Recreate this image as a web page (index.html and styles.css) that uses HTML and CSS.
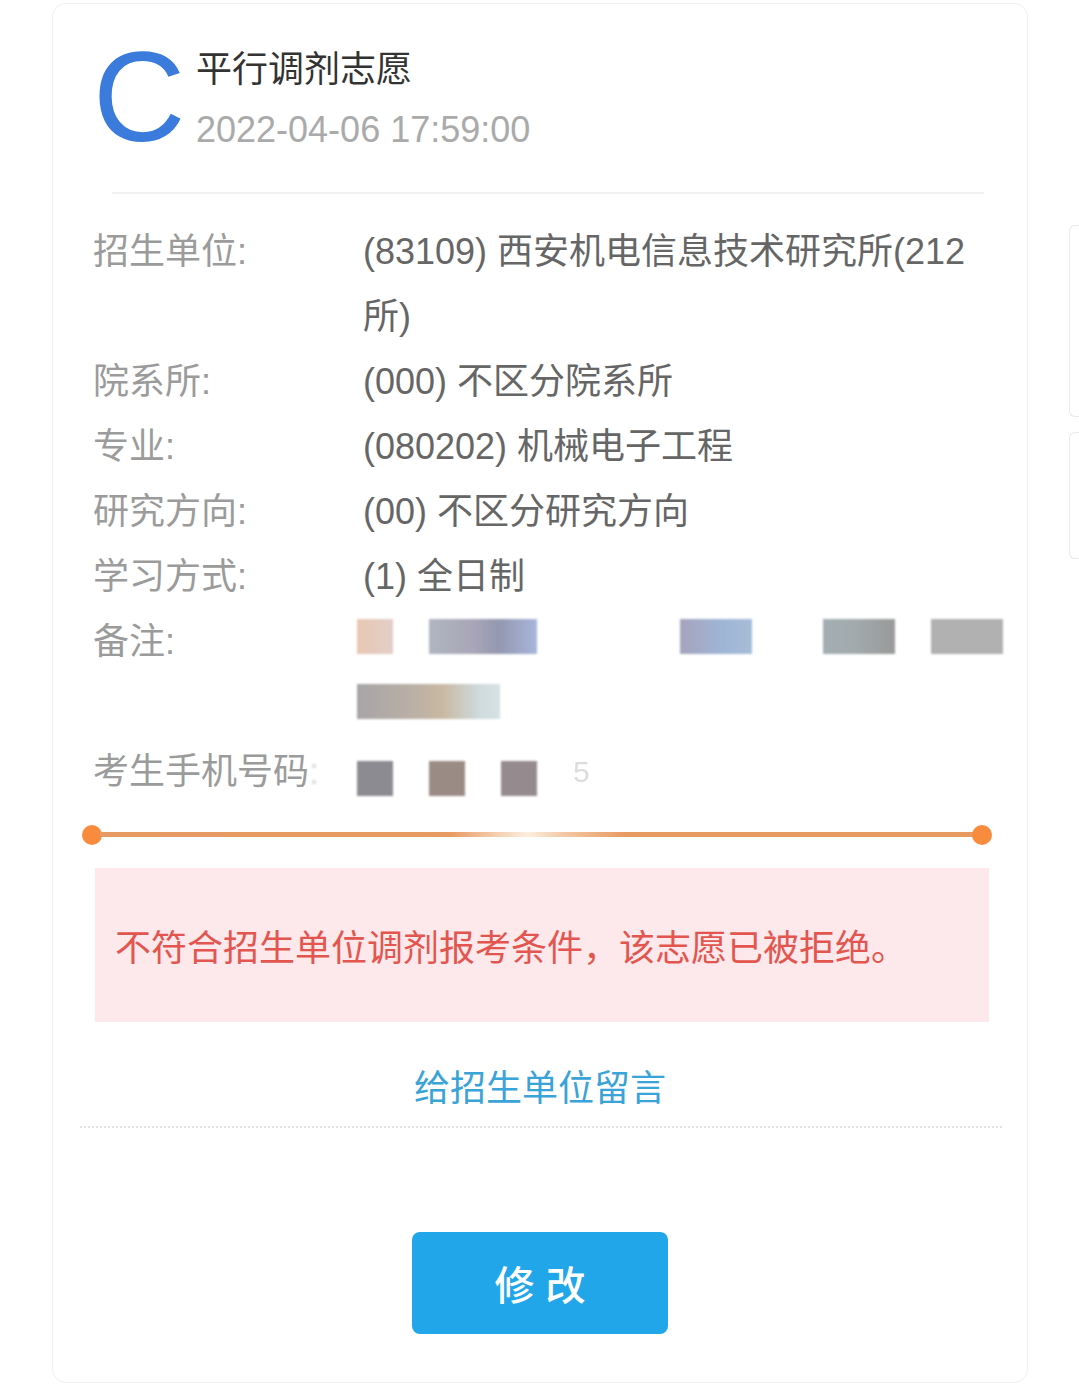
FILE: index.html
```html
<!DOCTYPE html>
<html lang="zh-CN">
<head>
<meta charset="utf-8">
<title>平行调剂志愿</title>
<link rel="stylesheet" href="styles.css">
</head>
<body>
<div class="page">
  <div class="card">
    <div class="header">
      <div class="grade">C</div>
      <div class="head-text">
        <div class="title">平行调剂志愿</div>
        <div class="date">2022-04-06 17:59:00</div>
      </div>
    </div>
    <div class="divider"></div>
    <div class="info">
      <div class="label">招生单位:</div>
      <div class="value">(83109) 西安机电信息技术研究所(212所)</div>
      <div class="label">院系所:</div>
      <div class="value">(000) 不区分院系所</div>
      <div class="label">专业:</div>
      <div class="value">(080202) 机械电子工程</div>
      <div class="label">研究方向:</div>
      <div class="value">(00) 不区分研究方向</div>
      <div class="label">学习方式:</div>
      <div class="value">(1) 全日制</div>
      <div class="label">备注:</div>
      <div class="value">
        <div class="blur-line">
          <span class="blk b1"></span><span class="blk b2"></span><span class="blk b3"></span><span class="blk b4"></span><span class="blk b5"></span>
        </div>
        <div class="blur-line">
          <span class="blk b6"></span>
        </div>
      </div>
      <div class="label nowrap">考生手机号码<span class="faint-colon">:</span></div>
      <div class="value">
        <div class="blur-line phone">
          <span class="blk p1"></span><span class="blk p2"></span><span class="blk p3"></span><span class="faint-digit">5</span>
        </div>
      </div>
    </div>
    <div class="progress">
      <span class="dot"></span>
      <span class="track"></span>
      <span class="dot"></span>
    </div>
    <div class="notice">不符合招生单位调剂报考条件，该志愿已被拒绝。</div>
    <div class="link-row"><span class="link">给招生单位留言</span></div>
    <div class="dotted"></div>
    <div class="btn-row"><button class="btn">修&nbsp;改</button></div>
  </div>
  <div class="side">
    <div class="side-box tall"></div>
    <div class="side-box short"></div>
  </div>
</div>
</body>
</html>
```

FILE: styles.css
```css
html, body {
  margin: 0;
  padding: 0;
  background: #ffffff;
  overflow: hidden;
}
body {
  font-family: "Liberation Sans", "Noto Sans CJK SC", sans-serif;
  width: 1079px;
  height: 1388px;
}
.page {
  display: flex;
  align-items: flex-start;
}
.card {
  margin-left: 52px;
  margin-top: 3px;
  width: 977px;
  height: 1380px;
  border: 1.5px solid #f3eef0;
  border-radius: 14px;
  padding: 0 40px 0 40px;
  box-sizing: border-box;
  display: flex;
  flex-direction: column;
}
.header {
  display: flex;
  align-items: flex-start;
  padding-top: 36px;
}
.grade {
  font-size: 128px;
  line-height: 120px;
  height: 120px;
  margin-top: -3px;
  color: #3a7bdc;
  width: 103px;
  flex: none;
}
.head-text {
  display: flex;
  flex-direction: column;
}
.title {
  font-size: 36px;
  line-height: 60px;
  color: #333333;
}
.date {
  font-size: 36px;
  line-height: 60px;
  color: #aaaaaa;
}
.divider {
  margin: 32px 3px 0 19px;
  height: 1.5px;
  background: #f4f1f1;
}
.info {
  margin-top: 25px;
  display: grid;
  grid-template-columns: 270px 624px;
  font-size: 36px;
  line-height: 65px;
}
.label {
  color: #9b9b9b;
  white-space: nowrap;
}
.value {
  color: #666666;
}
.faint-colon {
  color: #dadada;
  filter: blur(1px);
}
.blur-line {
  height: 65px;
  display: flex;
  align-items: flex-start;
  padding-top: 10px;
  box-sizing: border-box;
}
.blur-line.phone {
  padding-top: 22px;
}
.blk {
  display: block;
  height: 35px;
  flex: none;
  filter: blur(0.8px);
}
.b1 { margin-left: -6px; width: 36px; background: linear-gradient(90deg, #e9c6b3, #e2cfc8); }
.b2 { margin-left: 36px; width: 108px; background: linear-gradient(90deg, #b0b6c0, #a9a6b8 40%, #9498b0 65%, #a8b6dc); }
.b3 { margin-left: 143px; width: 72px; background: linear-gradient(90deg, #a7a3bd, #9eb6d6 60%, #a8bcd8); }
.b4 { margin-left: 71px; width: 72px; background: linear-gradient(90deg, #a4afb3, #a2aaac 45%, #999999); }
.b5 { margin-left: 36px; width: 72px; background: #b2b1b2; }
.b6 { margin-left: -6px; width: 143px; background: linear-gradient(90deg, #a7a5a8, #b8aea6 35%, #c9b9a3 60%, #cfdadc 85%, #d6e2e4); }
.p1 { margin-left: -6px; width: 36px; background: #8b8b91; }
.p2 { margin-left: 36px; width: 36px; background: #9b8b85; }
.p3 { margin-left: 36px; width: 36px; background: #958b8e; }
.faint-digit {
  margin-left: 36px;
  margin-top: -22px;
  font-size: 30px;
  color: #dcdcdc;
  line-height: 65px;
  filter: blur(0.6px);
}
.progress {
  margin-top: 21px;
  margin-left: -11px;
  margin-right: -5px;
  height: 20px;
  display: flex;
  align-items: center;
}
.dot {
  width: 20px;
  height: 20px;
  border-radius: 50%;
  background: #f88b3d;
  flex: none;
}
.track {
  flex: 1;
  height: 5px;
  margin: 0 -2px;
  background: linear-gradient(90deg, #e79a63 0%, #e89a62 40%, #f6d5b8 46%, #fbeede 49%, #f3c9a6 53%, #e89a62 60%, #e89a62 100%);
}
.notice {
  margin-top: 23px;
  margin-left: 2px;
  margin-right: -2px;
  height: 154px;
  background: #fde8ec;
  color: #e2564f;
  font-size: 36px;
  padding-left: 20px;
  display: flex;
  align-items: center;
}
.link-row {
  margin-top: 37px;
  text-align: center;
  line-height: 60px;
}
.link {
  font-size: 36px;
  color: #3aa3d8;
}
.dotted {
  margin: 0 -15px 0 -13px;
  border-top: 2px dotted #e2e2e2;
}
.btn-row {
  margin-top: 104px;
  display: flex;
  justify-content: center;
}
.btn {
  width: 256px;
  height: 102px;
  border: none;
  border-radius: 8px;
  background: #22a6ea;
  color: #ffffff;
  font-family: "Liberation Sans", "Noto Sans CJK SC", sans-serif;
  font-size: 40px;
  font-weight: 500;
  padding: 0;
}
.side {
  margin-left: 41px;
  margin-top: 225px;
  display: flex;
  flex-direction: column;
  gap: 15px;
  flex: none;
}
.side-box {
  width: 20px;
  border: 1.5px solid #e9e9e9;
  border-right: none;
  border-radius: 6px 0 0 6px;
}
.side-box.tall { height: 190px; }
.side-box.short { height: 125px; }
```
